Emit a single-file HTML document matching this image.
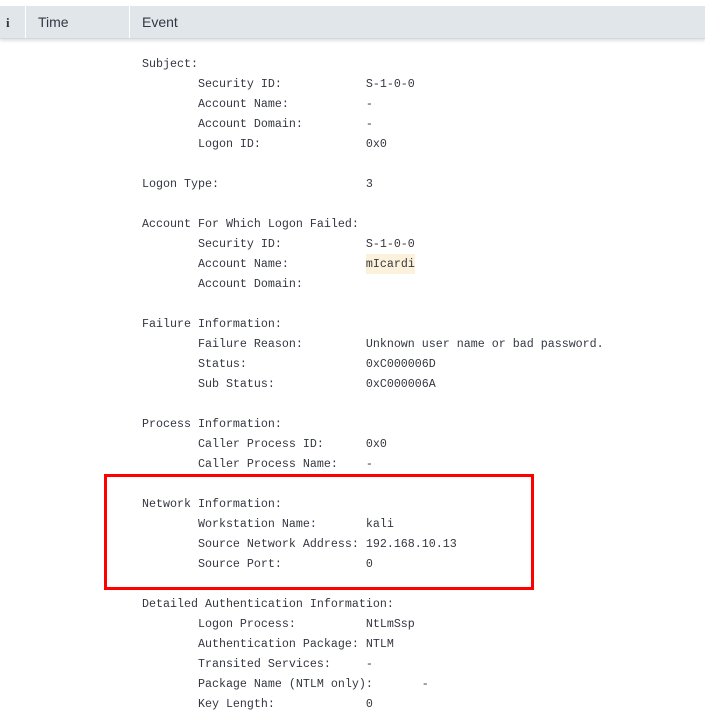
<!DOCTYPE html>
<html><head><meta charset="utf-8"><style>
html,body{margin:0;padding:0;background:#fff;width:705px;height:728px;overflow:hidden;}
.hdr{position:absolute;left:0;top:6px;width:705px;height:32px;background:#e1e6ea;box-shadow:0 2px 3px rgba(0,0,0,0.12);border-bottom:1px solid #d3d8dd;font-family:"Liberation Sans",sans-serif;font-size:14px;color:#343741;}
.hdr .d{position:absolute;top:0;width:1px;height:32px;background:#fff;}
.hdr span{position:absolute;top:8px;}
pre{position:absolute;left:142px;top:54px;margin:0;font-family:"Liberation Mono",monospace;font-size:11.67px;line-height:20px;color:#343741;}
.hl{background:#fcf1da;padding:3px 0;}
.box{position:absolute;left:104px;top:474px;width:424px;height:110px;border:3px solid #f00;}
</style></head><body>
<div class="hdr">
<span style="left:6px;font-family:'Liberation Serif',serif;font-weight:bold;font-size:13px;top:9px;">i</span>
<div class="d" style="left:25px"></div>
<span style="left:38px">Time</span>
<div class="d" style="left:129px"></div>
<span style="left:142px">Event</span>
</div>
<pre>Subject:
        Security ID:            S-1-0-0
        Account Name:           -
        Account Domain:         -
        Logon ID:               0x0

Logon Type:                     3

Account For Which Logon Failed:
        Security ID:            S-1-0-0
        Account Name:           <span class="hl">mIcardi</span>
        Account Domain:

Failure Information:
        Failure Reason:         Unknown user name or bad password.
        Status:                 0xC000006D
        Sub Status:             0xC000006A

Process Information:
        Caller Process ID:      0x0
        Caller Process Name:    -

Network Information:
        Workstation Name:       kali
        Source Network Address: 192.168.10.13
        Source Port:            0

Detailed Authentication Information:
        Logon Process:          NtLmSsp
        Authentication Package: NTLM
        Transited Services:     -
        Package Name (NTLM only):       -
        Key Length:             0</pre>
<div class="box"></div>
</body></html>
